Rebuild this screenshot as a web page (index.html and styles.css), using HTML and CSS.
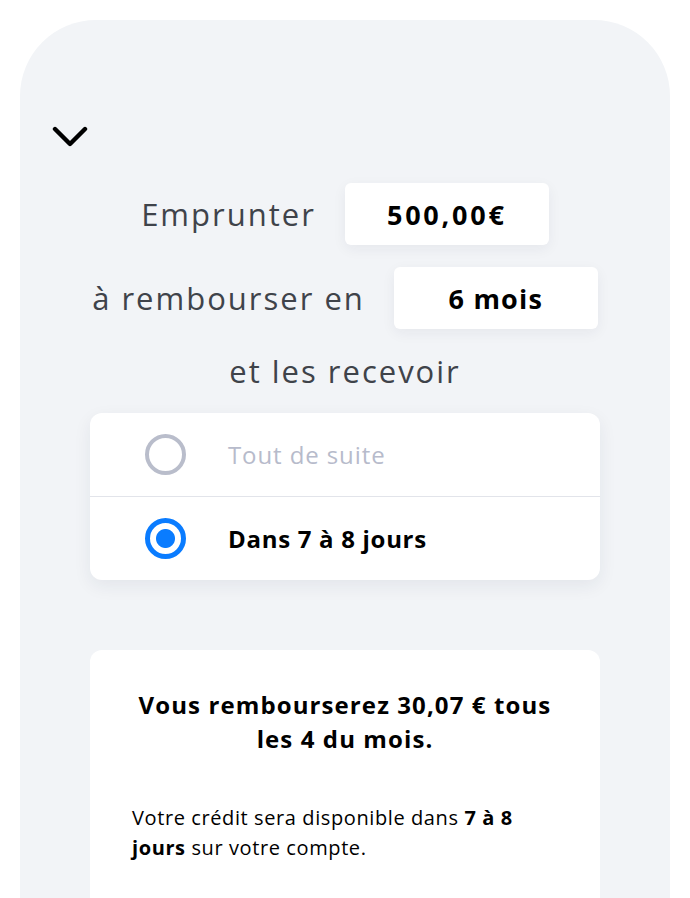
FILE: index.html
```html
<!DOCTYPE html>
<html>
<head>
<meta charset="utf-8"/>
<title>Emprunter</title>
<link rel="stylesheet" href="styles.css">
</head>
<body>
<div class="phone">
   <a class="back" href="#">
      <svg width="36" height="22" viewBox="0 0 36 22"><path d="M3 3 L18 18 L33 3" fill="none" stroke="#000" stroke-width="4.4" stroke-linecap="round" stroke-linejoin="round"/></svg>
   </a>

   <div class="content">
      <div class="row">
         <span class="label">Emprunter</span>
         <span class="field field-amount">500,00€</span>
      </div>
      <div class="row">
         <span class="label">à rembourser en</span>
         <span class="field field-duration">6 mois</span>
      </div>
      <p class="label receive">et les recevoir</p>

      <div class="card options">
         <div class="option">
            <span class="radio"></span>
            <span class="option-text muted">Tout de suite</span>
         </div>
         <div class="option">
            <span class="radio checked"></span>
            <span class="option-text">Dans 7 à 8 jours</span>
         </div>
      </div>

      <div class="card summary">
         <h2>Vous rembourserez 30,07 € tous les 4 du mois.</h2>
         <p>Votre crédit sera disponible dans <strong>7 à 8 jours</strong> sur votre compte.</p>
      </div>
   </div>
</div>
</body>
</html>
```

FILE: styles.css
```css
html, body {
   margin: 0;
   background-color: white;
   font-family: "Open Sans", "Noto Sans", sans-serif;
   color: #000;
   overflow: hidden;
}

.phone {
   margin: 20px 20px 0;
   min-height: 878px;
   background-color: #f2f4f7;
   border-radius: 76px 76px 0 0;
   padding-top: 106px;
   box-sizing: border-box;
}

.back {
   display: block;
   width: 36px;
   height: 22px;
   margin-left: 32px;
}

.back svg {
   display: block;
}

.content {
   padding: 0 70px;
   margin-top: 35px;
}

.row {
   display: flex;
   justify-content: center;
   align-items: center;
   gap: 29px;
   margin-bottom: 22px;
}

.label {
   font-size: 31px;
   letter-spacing: 2px;
   color: #3f434a;
}

.field {
   display: flex;
   align-items: center;
   justify-content: center;
   width: 204px;
   height: 62px;
   background-color: white;
   border-radius: 6px;
   box-shadow: 0 4px 14px rgba(30, 40, 70, 0.06);
   font-size: 27px;
   font-weight: bold;
}

.field-amount {
   letter-spacing: 2.8px;
}

.field-duration {
   letter-spacing: 1.2px;
}

.receive {
   margin: 6px 0 0;
   text-align: center;
   line-height: 40px;
}

.card {
   background-color: white;
   border-radius: 12px;
   box-shadow: 0 6px 18px rgba(30, 40, 70, 0.07);
}

.options {
   margin-top: 22px;
}

.option {
   display: flex;
   align-items: center;
   height: 83px;
   padding-left: 55px;
   gap: 42px;
}

.option + .option {
   border-top: 1px solid #e2e4ea;
}

.radio {
   width: 41px;
   height: 41px;
   box-sizing: border-box;
   border-radius: 50%;
   border: 4px solid #b9bdcb;
}

.radio.checked {
   border: 5px solid #0a7cff;
   background: radial-gradient(circle, #0a7cff 0 9px, white 10px);
}

.option-text {
   font-size: 24px;
   font-weight: bold;
   letter-spacing: 0.7px;
}

.option-text.muted {
   color: #b7bbcb;
   font-weight: normal;
   letter-spacing: 0.9px;
}

.summary {
   margin-top: 70px;
   padding: 38px 42px 40px;
   height: 260px;
   box-shadow: none;
}

.summary h2 {
   margin: 0;
   font-size: 24px;
   line-height: 34px;
   letter-spacing: 1.1px;
   text-align: center;
}

.summary p {
   margin: 47px 0 0;
   font-size: 20px;
   line-height: 30px;
   letter-spacing: 0.6px;
}
```
